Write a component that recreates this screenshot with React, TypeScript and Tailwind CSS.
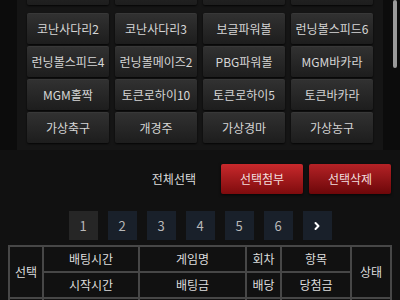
import { ChevronRight } from "lucide-react";

const topRow = ["a", "b", "c", "d"];

const games = [
  "코난사다리2",
  "코난사다리3",
  "보글파워볼",
  "런닝볼스피드6",
  "런닝볼스피드4",
  "런닝볼메이즈2",
  "PBG파워볼",
  "MGM바카라",
  "MGM홀짝",
  "토큰로하이10",
  "토큰로하이5",
  "토큰바카라",
  "가상축구",
  "개경주",
  "가상경마",
  "가상농구",
];

const pages = ["1", "2", "3", "4", "5", "6"];

const font = { fontFamily: '"Noto Sans CJK KR", "Noto Sans", sans-serif' };

function GameButton({ label }: { label?: string }) {
  return (
    <button
      type="button"
      className="flex h-[31px] items-center justify-center rounded-[2px] border-t border-[#383838] bg-gradient-to-b from-[#313131] to-[#1d1d1d] text-[12px] text-[#d6d6d6] shadow-[0_1px_2px_rgba(0,0,0,0.8)]"
    >
      {label}
    </button>
  );
}

export default function App() {
  return (
    <div
      className="relative h-[300px] w-[400px] overflow-hidden bg-[#111111]"
      style={font}
    >
      <div className="absolute right-[3px] top-0 h-[68px] w-[4px] rounded-full bg-[#9a9a9a]" />

      <div className="flex h-[150px] bg-[#0c0c0c]">
        <div className="ml-[17px] w-[366px] bg-[#151515] pl-[10px]">
          {/* row scrolled mostly out of view */}
          <div className="mt-[-26px] grid grid-cols-[82px_82px_82px_82px] gap-x-[6px]">
            {topRow.map((key) => (
              <GameButton key={key} />
            ))}
          </div>

          <div className="mt-[8px] grid grid-cols-[82px_82px_82px_82px] gap-x-[6px] gap-y-[2px]">
            {games.map((label) => (
              <GameButton key={label} label={label} />
            ))}
          </div>
        </div>
      </div>

      <div className="mt-[14px] flex items-center justify-end pr-[9px]">
        <span className="mr-[25px] text-[12px] text-[#dddddd]">전체선택</span>
        <div className="flex gap-[6px]">
          <button
            type="button"
            className="h-[30px] w-[82px] rounded-[2px] bg-gradient-to-b from-[#c9292c] to-[#7e0b0d] text-[12px] text-[#f2dede] shadow-[0_1px_3px_rgba(0,0,0,0.7)]"
          >
            선택첨부
          </button>
          <button
            type="button"
            className="h-[30px] w-[82px] rounded-[2px] bg-gradient-to-b from-[#b52226] to-[#6d0709] text-[12px] text-[#f2dede] shadow-[0_1px_3px_rgba(0,0,0,0.7)]"
          >
            선택삭제
          </button>
        </div>
      </div>

      <div className="mt-[17px] flex justify-center gap-[10px]">
        {pages.map((page) => (
          <span
            key={page}
            className={`flex h-[29px] w-[29px] items-center justify-center text-[13px] text-[#b8b8b8] ${
              page === "1" ? "bg-[#262626]" : "bg-[#19202a]"
            }`}
          >
            {page}
          </span>
        ))}
        <span className="flex h-[29px] w-[29px] items-center justify-center bg-[#19202a] text-white">
          <ChevronRight size={12} strokeWidth={4} />
        </span>
      </div>

      <table className="ml-[8px] mt-[5px] w-[384px] border-collapse text-[12px] text-[#dddddd]">
        <tbody>
          <tr className="h-[26px]">
            <td rowSpan={2} className="w-[34px] border-2 border-[#474747] text-center">
              선택
            </td>
            <td className="w-[96px] border-2 border-[#474747] text-center">배팅시간</td>
            <td className="w-[107px] border-2 border-[#474747] text-center">게임명</td>
            <td className="w-[35px] border-2 border-[#474747] text-center">회차</td>
            <td className="w-[70px] border-2 border-[#474747] text-center">항목</td>
            <td rowSpan={2} className="border-2 border-[#474747] text-center">
              상태
            </td>
          </tr>
          <tr className="h-[26px]">
            <td className="border-2 border-[#474747] text-center">시작시간</td>
            <td className="border-2 border-[#474747] text-center">배팅금</td>
            <td className="border-2 border-[#474747] text-center">배당</td>
            <td className="border-2 border-[#474747] text-center">당첨금</td>
          </tr>
          <tr className="h-[26px]">
            <td className="border-2 border-[#474747]" />
            <td className="border-2 border-[#474747]" />
            <td className="border-2 border-[#474747]" />
            <td className="border-2 border-[#474747]" />
            <td className="border-2 border-[#474747]" />
            <td className="border-2 border-[#474747]" />
          </tr>
        </tbody>
      </table>
    </div>
  );
}
